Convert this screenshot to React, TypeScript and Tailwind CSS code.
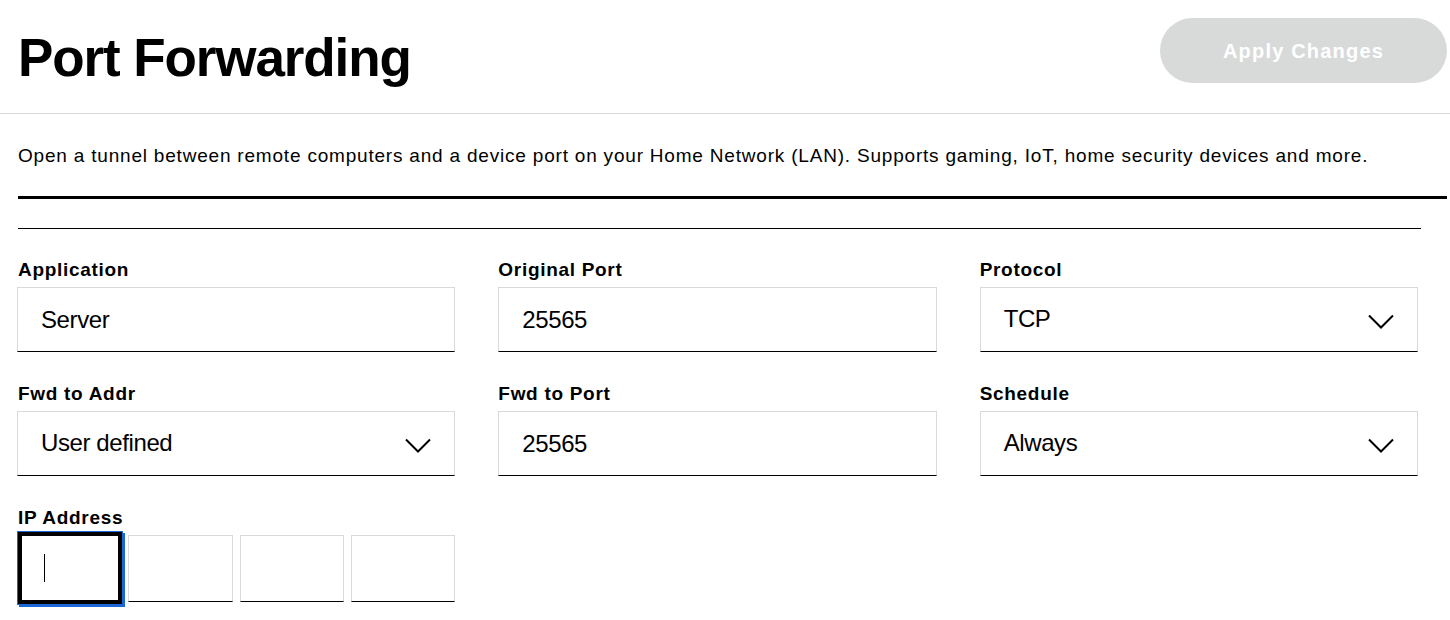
import React from "react";

const font = { fontFamily: '"Liberation Sans", Arial, sans-serif' };

function Chevron() {
  return (
    <svg width="26" height="16" viewBox="0 0 26 16" className="translate-y-[2px]">
      <polyline points="1,1.5 13,13.5 25,1.5" fill="none" stroke="#000" strokeWidth="2" />
    </svg>
  );
}

function Label({ children }: { children: React.ReactNode }) {
  return (
    <div className="text-[19px] leading-[19px] h-[19px] font-bold tracking-[0.7px] text-black mb-[8px] whitespace-nowrap">
      {children}
    </div>
  );
}

function TextBox({ value }: { value: string }) {
  return (
    <div className="h-[65px] border border-[#d8dada] border-b-black flex items-center pl-[23px] text-[24px] tracking-[-0.4px] text-black">
      {value}
    </div>
  );
}

function SelectBox({ value }: { value: string }) {
  return (
    <div className="h-[65px] border border-[#d8dada] border-b-black flex items-center justify-between pl-[23px] pr-[23px] text-[24px] tracking-[-0.4px] text-black">
      <span className="-translate-y-[1px]">{value}</span>
      <Chevron />
    </div>
  );
}

export default function App() {
  return (
    <div className="w-[1450px] h-[620px] bg-white overflow-hidden text-black" style={font}>
      <header className="h-[114px] border-b border-[#d8dada] flex items-start justify-between pl-[18px] pr-[3px]">
        <h1 className="mt-[31px] text-[53px] leading-none font-bold tracking-[-1.1px] whitespace-nowrap">Port Forwarding</h1>
        <button className="mt-[18px] w-[287px] h-[65px] rounded-full bg-[#d8dada] text-white text-[20px] font-bold tracking-[1.2px]">
          Apply Changes
        </button>
      </header>
      <div className="pl-[18px] pr-[3px]">
        <p className="mt-[32px] text-[19px] leading-none tracking-[0.8px] whitespace-nowrap">
          Open a tunnel between remote computers and a device port on your Home Network (LAN). Supports gaming, IoT, home security devices and more.
        </p>
        <div className="mt-[31px] h-[3px] bg-black" />
        <div className="mt-[29px] h-px bg-black w-[1403px]" />
        <div className="mt-[31px] -ml-px w-[1401px] grid grid-cols-3 gap-x-[43px] gap-y-[32px]">
          <div>
            <div className="pl-px"><Label>Application</Label></div>
            <TextBox value="Server" />
          </div>
          <div>
            <Label>Original Port</Label>
            <TextBox value="25565" />
          </div>
          <div>
            <Label>Protocol</Label>
            <SelectBox value="TCP" />
          </div>
          <div>
            <div className="pl-px"><Label>Fwd to Addr</Label></div>
            <SelectBox value="User defined" />
          </div>
          <div>
            <Label>Fwd to Port</Label>
            <TextBox value="25565" />
          </div>
          <div>
            <Label>Schedule</Label>
            <SelectBox value="Always" />
          </div>
          <div>
            <div className="pl-px"><Label>IP Address</Label></div>
            <div className="grid grid-cols-4 gap-x-[7px] mt-[1px]">
              <div className="relative h-[67px]">
                <div className="absolute left-px right-[-1px] top-[-3px] bottom-[-2px] border-[4px] border-black bg-white shadow-[0_0_0_1px_#1a66d2,2px_2px_0_1px_#1a66d2] flex items-center pl-[22px]">
                  <span className="block w-px h-[28px] bg-black" />
                </div>
              </div>
              <div className="h-[67px] border border-[#d8dada] border-b-black" />
              <div className="h-[67px] border border-[#d8dada] border-b-black" />
              <div className="h-[67px] border border-[#d8dada] border-b-black" />
            </div>
          </div>
        </div>
      </div>
    </div>
  );
}
